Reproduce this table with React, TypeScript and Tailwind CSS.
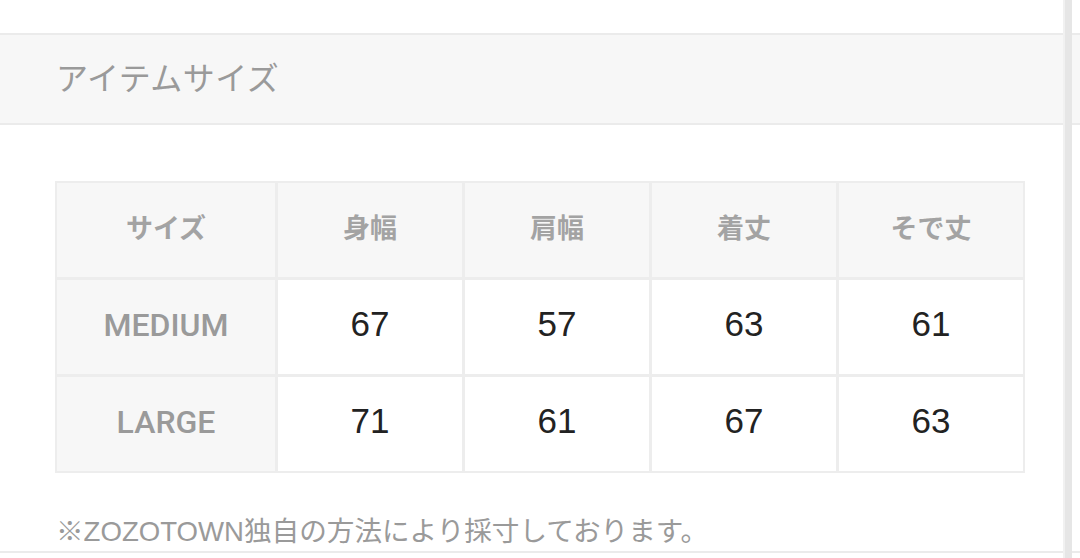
const headers = ["サイズ", "身幅", "肩幅", "着丈", "そで丈"];

const rows = [
  { size: "MEDIUM", values: ["67", "57", "63", "61"] },
  { size: "LARGE", values: ["71", "61", "67", "63"] },
];

export default function App() {
  return (
    <div
      className="relative w-[1080px] h-[558px] overflow-hidden bg-white"
      style={{ fontFamily: '"Liberation Sans", "Noto Sans CJK JP", sans-serif' }}
    >
      <div className="h-[33px]" />

      {/* section title */}
      <div className="h-[92px] flex items-center pl-[56px] bg-[#f7f7f7] border-y-2 border-[#ebebeb] text-[32px] text-[#9a9a9a] tracking-[0.5px]">
        アイテムサイズ
      </div>

      {/* size table */}
      <div className="pl-[55px] pt-[56px]">
        <div className="grid w-[970px] grid-cols-[218px_repeat(4,1fr)] gap-[3px] p-[2px] bg-[#ededed]">
          {headers.map((h) => (
            <div
              key={h}
              className="h-[94px] pb-[5px] flex items-center justify-center bg-[#f7f7f7] text-[27px] font-bold text-[#a3a3a3] font-['Noto_Sans_CJK_JP',sans-serif]"
            >
              {h}
            </div>
          ))}
          {rows.map((r) => (
            <>
              <div
                key={r.size}
                className="h-[94px] pb-[5px] flex items-center justify-center bg-[#f7f7f7] text-[32px] font-medium text-[#9a9a9a] font-['Roboto',sans-serif]"
              >
                {r.size}
              </div>
              {r.values.map((v, i) => (
                <div
                  key={r.size + i}
                  className="h-[94px] pb-[5px] flex items-center justify-center bg-white text-[35px] text-[#222]"
                >
                  {v}
                </div>
              ))}
            </>
          ))}
        </div>
      </div>

      <p className="pl-[56px] mt-[44px] text-[27.6px] leading-[30px] text-[#9a9a9a]">
        ※ZOZOTOWN独自の方法により採寸しております。
      </p>
      <div className="mt-[4px] border-t-2 border-[#ebebeb]" />

      {/* scroll track on the right */}
      <div className="absolute top-0 bottom-0 right-[8px] w-[9px] bg-[#e6e6e6] border-l-2 border-[#f1f1f1]" />
    </div>
  );
}
